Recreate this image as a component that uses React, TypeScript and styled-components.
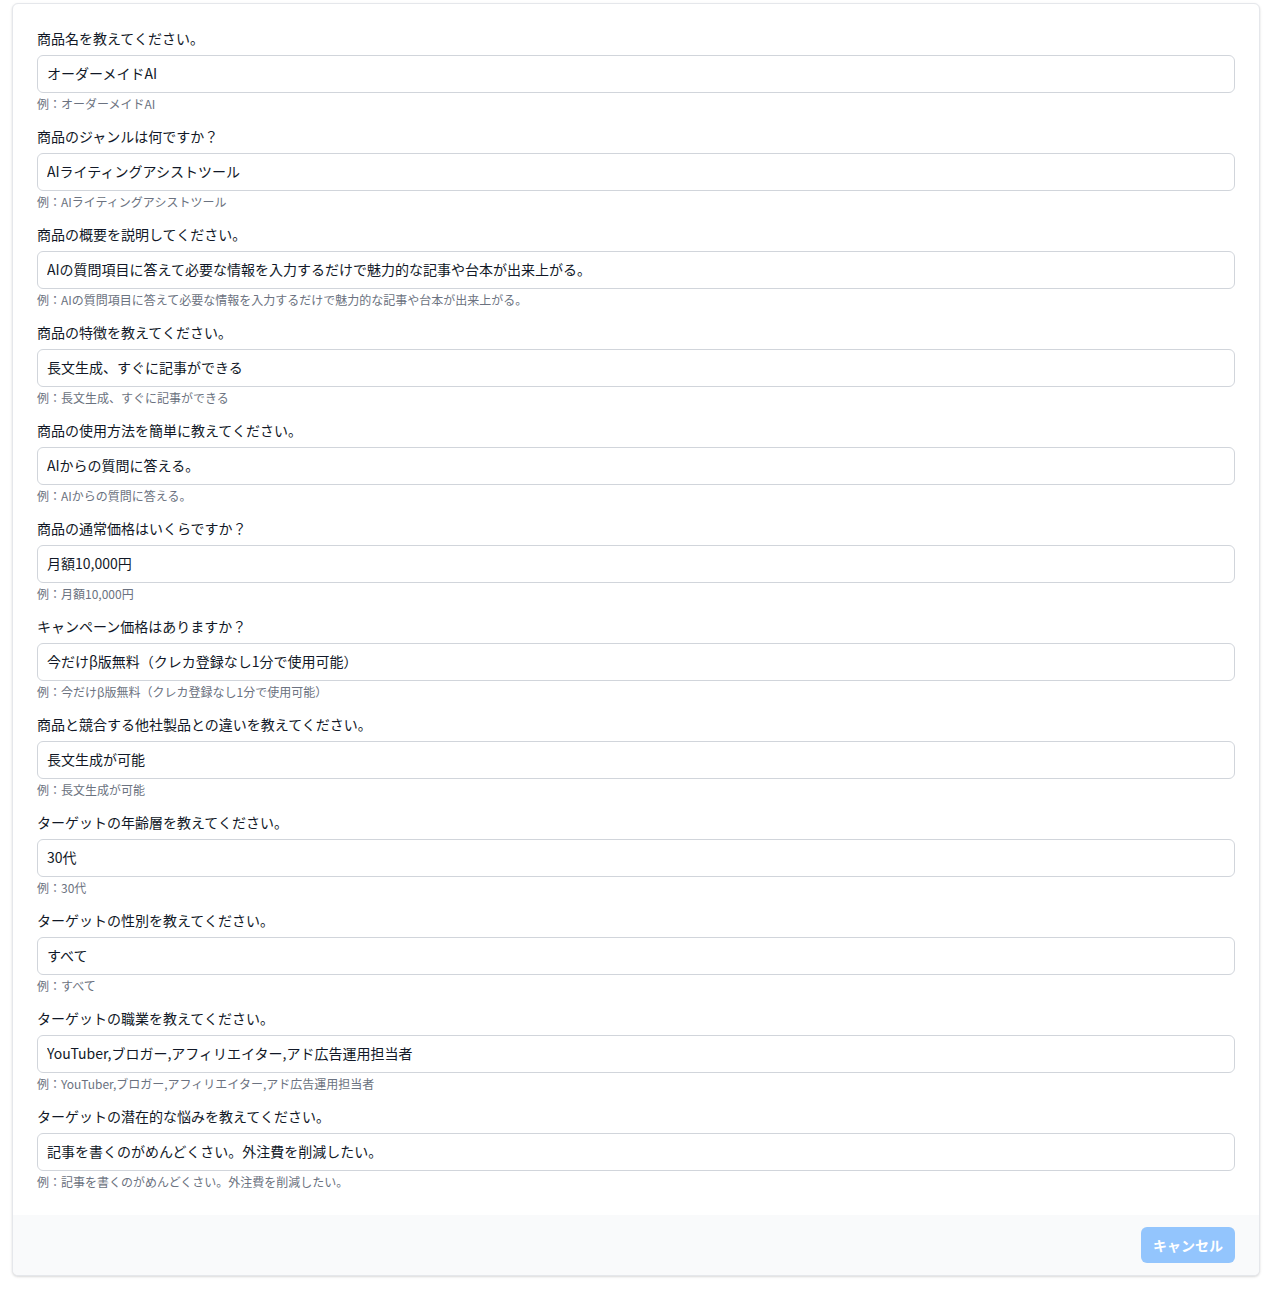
import { createGlobalStyle, styled } from 'styled-components';

const GlobalStyle = createGlobalStyle`
  * { box-sizing: border-box; }
  body {
    margin: 0;
    background: #ffffff;
    font-family: "Noto Sans CJK JP", "Noto Sans", sans-serif;
    color: #111827;
  }
`;

const Page = styled.div`
  padding: 3px 8px 14px 12px;
`;

const Card = styled.div`
  background: #ffffff;
  border: 1px solid #e5e7eb;
  border-radius: 6px;
  box-shadow: 0 1px 3px rgba(0, 0, 0, 0.1), 0 1px 2px rgba(0, 0, 0, 0.06);
  overflow: hidden;
`;

const Body = styled.div`
  padding: 24px 24px 25px;
  display: flex;
  flex-direction: column;
  gap: 14px;
`;

const Field = styled.div`
  display: flex;
  flex-direction: column;
`;

const Label = styled.label`
  font-size: 14px;
  line-height: 20px;
  color: #111827;
  margin-bottom: 7px;
`;

const Input = styled.input`
  width: 100%;
  height: 38px;
  padding: 0 9px 3px;
  border: 1px solid #d1d5db;
  border-radius: 6px;
  font-family: inherit;
  font-size: 14px;
  color: #111827;
  background: #ffffff;
  outline: none;
`;

const Help = styled.p`
  margin: 3px 0 0;
  font-size: 12px;
  line-height: 16px;
  color: #6b7280;
`;

const Footer = styled.div`
  background: #f9fafb;
  padding: 12px 24px;
  display: flex;
  justify-content: flex-end;
`;

const CancelButton = styled.button`
  height: 36px;
  padding: 0 12px;
  border: none;
  border-radius: 6px;
  background: #93c5fd;
  color: #ffffff;
  font-family: inherit;
  font-size: 14px;
  font-weight: 700;
  cursor: pointer;
`;

const fields = [
  { label: '商品名を教えてください。', value: 'オーダーメイドAI' },
  { label: '商品のジャンルは何ですか？', value: 'AIライティングアシストツール' },
  {
    label: '商品の概要を説明してください。',
    value: 'AIの質問項目に答えて必要な情報を入力するだけで魅力的な記事や台本が出来上がる。',
  },
  { label: '商品の特徴を教えてください。', value: '長文生成、すぐに記事ができる' },
  { label: '商品の使用方法を簡単に教えてください。', value: 'AIからの質問に答える。' },
  { label: '商品の通常価格はいくらですか？', value: '月額10,000円' },
  { label: 'キャンペーン価格はありますか？', value: '今だけβ版無料（クレカ登録なし1分で使用可能）' },
  { label: '商品と競合する他社製品との違いを教えてください。', value: '長文生成が可能' },
  { label: 'ターゲットの年齢層を教えてください。', value: '30代' },
  { label: 'ターゲットの性別を教えてください。', value: 'すべて' },
  {
    label: 'ターゲットの職業を教えてください。',
    value: 'YouTuber,ブロガー,アフィリエイター,アド広告運用担当者',
  },
  {
    label: 'ターゲットの潜在的な悩みを教えてください。',
    value: '記事を書くのがめんどくさい。外注費を削減したい。',
  },
];

export default function App() {
  return (
    <>
      <GlobalStyle />
      <Page>
        <Card>
          <Body>
            {fields.map((f, i) => (
              <Field key={i}>
                <Label htmlFor={`field-${i}`}>{f.label}</Label>
                <Input id={`field-${i}`} defaultValue={f.value} />
                <Help>例：{f.value}</Help>
              </Field>
            ))}
          </Body>
          <Footer>
            <CancelButton type="button">キャンセル</CancelButton>
          </Footer>
        </Card>
      </Page>
    </>
  );
}
